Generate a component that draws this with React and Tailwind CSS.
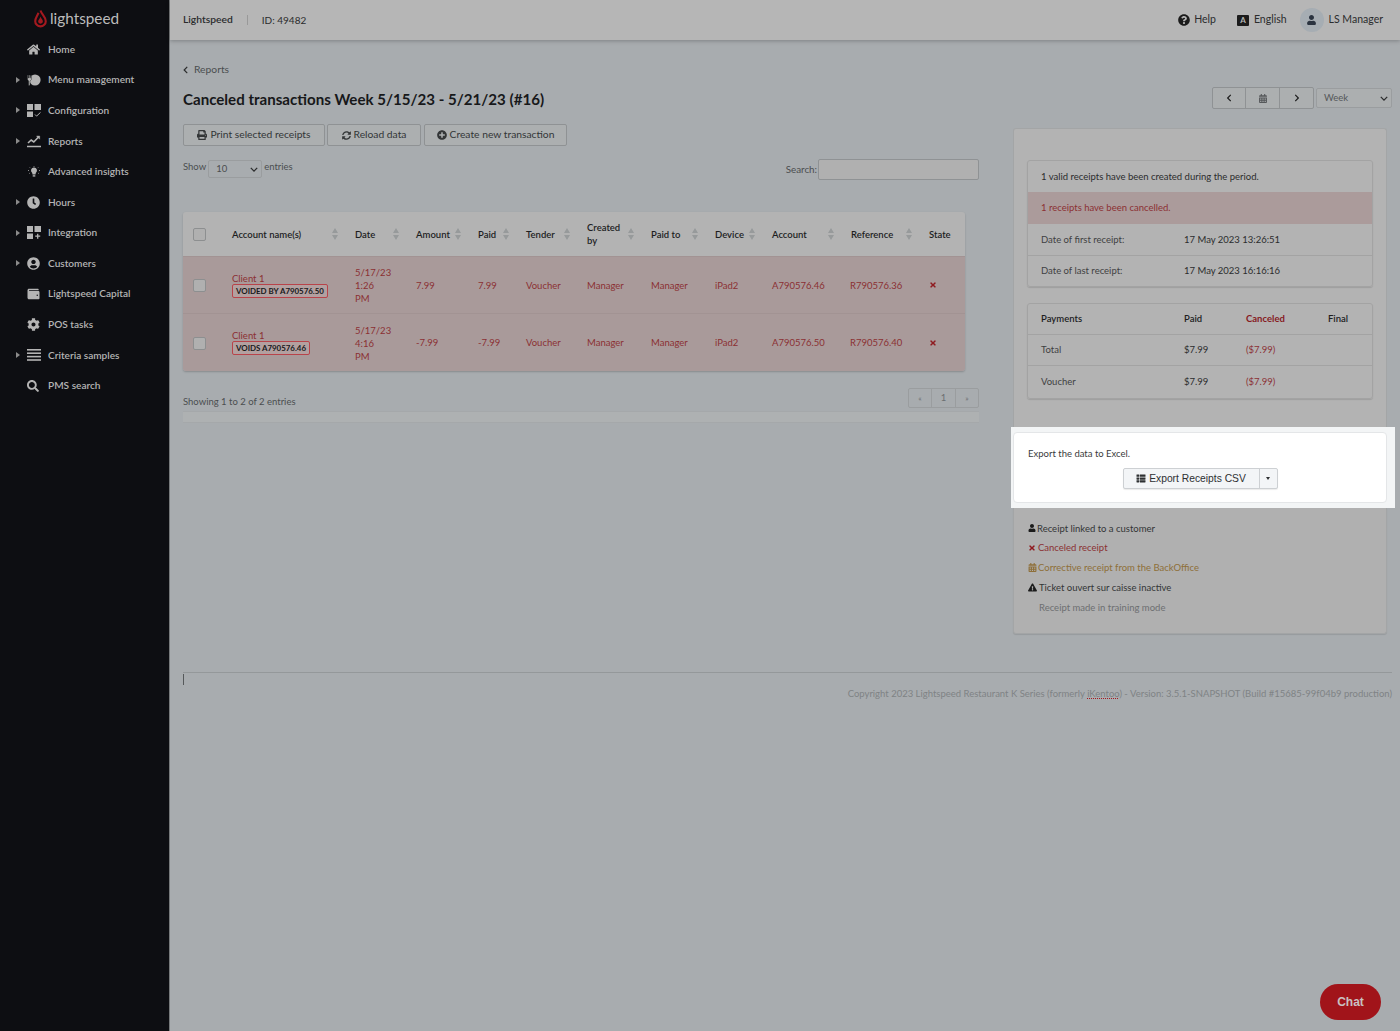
import {
  FaHome, FaClock, FaUserCircle, FaCog, FaSearch, FaQuestionCircle, FaPrint, FaSyncAlt, FaPlusCircle,
  FaTimes, FaUser, FaCalendarAlt, FaExclamationTriangle, FaChevronLeft, FaChevronRight, FaThList,
  FaWallet,
} from 'react-icons/fa'

function MenuIcon() {
  return (
    <svg viewBox="0 0 14 12" className="w-[14px] h-[12px]" fill="currentColor">
      <circle cx="8" cy="6" r="5.6" />
      <path d="M0.5 1h1v3h.6V1h1v3h.6V1h.8v4.5L3 7v4.5H1.6V7L.5 5.5z" stroke="#0d0e12" strokeWidth=".4" />
    </svg>
  )
}

function ConfigIcon() {
  return (
    <svg viewBox="0 0 14 13" className="w-[14px] h-[13px]" fill="currentColor">
      <rect x="0" y="0" width="6" height="6" />
      <rect x="7.5" y="0" width="6.5" height="6" />
      <rect x="0" y="7.5" width="6" height="5.5" />
      <path d="M8 10.5l1.6 1.6L13.5 8.4" fill="none" stroke="currentColor" strokeWidth="1" />
    </svg>
  )
}

function IntegrationIcon() {
  return (
    <svg viewBox="0 0 14 13" className="w-[14px] h-[13px]" fill="currentColor">
      <rect x="0" y="0" width="6" height="6" />
      <rect x="7.5" y="0" width="6.5" height="6" />
      <rect x="0" y="7.5" width="6" height="5.5" />
      <path d="M10.7 7.7v5M8.2 10.2h5" fill="none" stroke="currentColor" strokeWidth="1.3" />
    </svg>
  )
}

function ReportsIcon() {
  return (
    <svg viewBox="0 0 14 13" className="w-[14px] h-[13px]" fill="none" stroke="currentColor">
      <path d="M1 8l3.2-3 2.6 2L12 1.5" strokeWidth="1.6" />
      <path d="M9.5 1h3.2v3.2z" fill="currentColor" strokeWidth=".4" />
      <path d="M0 11.5h14" strokeWidth="1.5" />
    </svg>
  )
}

function BarsIcon() {
  return (
    <svg viewBox="0 0 14 12" className="w-[14px] h-[12px]" fill="currentColor">
      <rect y="0" width="14" height="1.6" />
      <rect y="3.4" width="14" height="1.6" />
      <rect y="6.8" width="14" height="1.6" />
      <rect y="10.2" width="14" height="1.6" />
    </svg>
  )
}

function BulbIcon() {
  return (
    <svg viewBox="0 0 14 12" className="w-[14px] h-[12px]" fill="currentColor">
      <path d="M7 1.500a3 3 0 0 1 1.800 5.400L8.500 8.500h-3l-.3-1.600A3 3 0 0 1 7 1.500z" />
      <rect x="5.700" y="9.200" width="2.600" height="1.400" />
      <path d="M7 0v.8M2.800 1.500l.6.6M11.200 1.500l-.6.6M1 4.500h1M12 4.500h1M2.300 7.500l.7-.5M11.700 7.500l-.7-.5" stroke="currentColor" strokeWidth=".8" />
    </svg>
  )
}

const navItems = [
  { label: 'Home', icon: <FaHome className="w-[13px] h-[13px]" /> },
  { label: 'Menu management', icon: <MenuIcon />, caret: true },
  { label: 'Configuration', icon: <ConfigIcon />, caret: true },
  { label: 'Reports', icon: <ReportsIcon />, caret: true },
  { label: 'Advanced insights', icon: <BulbIcon /> },
  { label: 'Hours', icon: <FaClock className="w-[13px] h-[13px]" />, caret: true },
  { label: 'Integration', icon: <IntegrationIcon />, caret: true },
  { label: 'Customers', icon: <FaUserCircle className="w-[13px] h-[13px]" />, caret: true },
  { label: 'Lightspeed Capital', icon: <FaWallet className="w-[13px] h-[12px]" /> },
  { label: 'POS tasks', icon: <FaCog className="w-[13px] h-[13px]" /> },
  { label: 'Criteria samples', icon: <BarsIcon />, caret: true },
  { label: 'PMS search', icon: <FaSearch className="w-[12px] h-[12px]" /> },
]

const columns = [
  { label: 'Account name(s)', w: 'w-[123px]' },
  { label: 'Date', w: 'w-[61px]' },
  { label: 'Amount', w: 'w-[62px]' },
  { label: 'Paid', w: 'w-[48px]' },
  { label: 'Tender', w: 'w-[61px]' },
  { label: 'Created by', w: 'w-[64px]' },
  { label: 'Paid to', w: 'w-[64px]' },
  { label: 'Device', w: 'w-[57px]' },
  { label: 'Account', w: 'w-[79px]' },
  { label: 'Reference', w: 'w-[78px]' },
]

const rows = [
  { tag: 'VOIDED BY A790576.50', time: '1:26', amount: '7.99', account: 'A790576.46', reference: 'R790576.36' },
  { tag: 'VOIDS A790576.46', time: '4:16', amount: '-7.99', account: 'A790576.50', reference: 'R790576.40' },
]

function Sort() {
  return (
    <svg viewBox="0 0 6 12" className="w-[6px] h-[12px] shrink-0" fill="#979a9b">
      <path d="M3 0l3 5H0zM3 12L0 7h6z" />
    </svg>
  )
}

function Checkbox() {
  return <span className="block w-[13px] h-[13px] rounded-[2px] border border-[#8d8f90] bg-[#b0b0b0]" />
}

function ToolButton({ icon, children, className }) {
  return (
    <button className={`h-[22px] flex items-center justify-center gap-[3px] rounded-[2px] border border-[#8f9294] bg-[#acafb0] text-[10.3px] text-[#333637] ${className}`}>
      {icon}
      {children}
    </button>
  )
}

function Chevron({ className }) {
  return (
    <svg viewBox="0 0 10 6" className={`w-[8px] h-[5px] ${className}`} fill="none" stroke="currentColor" strokeWidth="1.6">
      <path d="M1 1l4 4 4-4" />
    </svg>
  )
}

export default function App() {
  return (
    <div className="flex min-h-screen bg-[#a8acaf] font-['Lato',sans-serif] text-[9.5px] text-[#2b2c2d]">
      <aside className="w-[170px] shrink-0 bg-[#0d0e12] border-r border-[#76797b] text-[#b4b4b4]">
        <div className="h-[34px] flex items-start pt-[9px] pl-[34px] gap-[3px]">
          <svg viewBox="0 0 12 18" className="w-[13px] h-[19px]" fill="none" stroke="#a4191f" strokeWidth="2">
            <path d="M6 1.500C7 5 11 7.500 11 11.500A5 5 0 0 1 1 11.500C1 8.500 3.500 6 4 3.500" />
            <path d="M6 7c.5 2 2.300 3 2.300 4.700a2.300 2.300 0 0 1-4.600 0C3.700 10.400 5.500 9 6 7z" fill="#a4191f" stroke="none" />
          </svg>
          <span className="mt-[2px] text-[15.3px] leading-none text-[#bcbcbc]">lightspeed</span>
        </div>
        <nav className="flex flex-col">
          {navItems.map((item) => (
            <div key={item.label} className="h-[30.6px] flex items-center">
              <span className="w-[27px] pl-[16px] flex items-center">
                {item.caret && <span className="w-0 h-0 border-y-[3px] border-y-transparent border-l-[4px] border-l-[#8b8b8b]" />}
              </span>
              <span className="w-[21px] flex justify-start">{item.icon}</span>
              <span className="text-[10.1px] font-semibold whitespace-nowrap">{item.label}</span>
            </div>
          ))}
        </nav>
      </aside>

      <div className="flex-1 min-w-0 flex flex-col">
        <header className="h-10 shrink-0 flex items-center justify-between pl-[13px] pr-[17px] bg-[#b6b6b6] shadow-[0_1px_4px_rgba(0,0,0,0.25)] text-[10.5px]">
          <div className="flex items-center">
            <span className="font-semibold text-[10.3px]">Lightspeed</span>
            <span className="w-px h-[10px] bg-[#999] ml-[14px] mr-[14px]" />
            <span className="text-[10px]">ID: 49482</span>
          </div>
          <div className="flex items-center">
            <FaQuestionCircle className="w-[12px] h-[12px] text-[#1b1b1b] mr-1" />
            <span>Help</span>
            <span className="w-[16px] h-[12px] ml-[21px] mr-[1px] flex items-center">
              <span className="w-[12px] h-[11px] bg-[#1b1b1b] rounded-[1px] text-[#b6b6b6] text-[8px] leading-[11px] text-center font-bold">A</span>
            </span>
            <span>English</span>
            <span className="w-[24px] h-[24px] rounded-full bg-[#a6adb3] ml-[13px] mr-[5px] flex items-center justify-center">
              <FaUser className="w-[9px] h-[10px] text-[#2a3340]" />
            </span>
            <span>LS Manager</span>
          </div>
        </header>

        <main className="flex-1 pl-[13px] pr-[8px]">
          <div className="h-[84px]">
            <div className="pt-[23px] flex items-center gap-[6px] text-[10.3px] leading-[13px] text-[#4b4e50]">
              <FaChevronLeft className="w-[5px] h-[8px] text-[#2b2c2d]" />
              Reports
            </div>
            <div className="flex items-start justify-between">
              <h1 className="mt-[13px] text-[15.1px] leading-[20px] font-bold text-[#17181a]">
                Canceled transactions Week 5/15/23 - 5/21/23 (#16)
              </h1>
              <div className="mt-[11px] flex items-center gap-[2px]">
                <div className="flex h-[22px] rounded-[2px] border border-[#8f9294] bg-[#acafb0]">
                  <span className="w-[33px] flex items-center justify-center border-r border-[#8f9294]">
                    <FaChevronLeft className="w-[6px] h-[8px] text-[#1d1d1d]" />
                  </span>
                  <span className="w-[34px] flex items-center justify-center border-r border-[#8f9294]">
                    <FaCalendarAlt className="w-[8px] h-[9px] text-[#55585a]" />
                  </span>
                  <span className="w-[33px] flex items-center justify-center">
                    <FaChevronRight className="w-[6px] h-[8px] text-[#1d1d1d]" />
                  </span>
                </div>
                <div className="w-[76px] h-[20px] rounded-[2px] border border-[#9a9d9f] bg-[#acafb0] pl-[7px] pr-[3px] flex items-center justify-between text-[#55585a]">
                  Week
                  <Chevron className="text-[#2b2c2d]" />
                </div>
              </div>
            </div>
          </div>

          <div className="flex items-start gap-[34px]">
            <section className="w-[796px] shrink-0">
              <div className="flex gap-[2px]">
                <ToolButton className="w-[142px]" icon={<FaPrint className="w-[10px] h-[10px]" />}>Print selected receipts</ToolButton>
                <ToolButton className="w-[94px]" icon={<FaSyncAlt className="w-[9px] h-[9px]" />}>Reload data</ToolButton>
                <ToolButton className="w-[143px] ml-px" icon={<FaPlusCircle className="w-[10px] h-[10px]" />}>Create new transaction</ToolButton>
              </div>

              <div className="mt-[13px] flex items-start justify-between">
                <div className="flex items-start gap-[2px] text-[#4b4e50]">
                  <span className="leading-[16px]">Show</span>
                  <span className="w-[54px] h-[18px] mt-[1px] rounded-[2px] border border-[#9a9d9f] pl-[7px] pr-[3px] flex items-center justify-between">
                    10
                    <Chevron className="text-[#2b2c2d]" />
                  </span>
                  <span className="leading-[16px]">entries</span>
                </div>
                <div className="flex items-center gap-px text-[#4b4e50]">
                  <span className="text-[9.8px]">Search:</span>
                  <span className="block w-[161px] h-[21px] rounded-[2px] border border-[#8f9294] bg-[#b0b0b0]" />
                </div>
              </div>

              <div className="mt-[32px] w-[782px] rounded-[3px] overflow-hidden shadow-[0_1px_2px_rgba(0,0,0,0.2)]">
                <table className="w-full table-fixed border-collapse text-left">
                  <thead>
                    <tr className="h-[44px] bg-[#b3b3b3] text-[#1d1e1f]">
                      <th className="w-[37px] pl-[10px] pt-px"><Checkbox /></th>
                      {columns.map((col) => (
                        <th key={col.label} className={`${col.w} font-semibold p-0 pt-px`}>
                          <div className="flex items-center justify-between pl-[12px] pr-[5px] leading-[13px]">
                            <span>{col.label}</span>
                            <Sort />
                          </div>
                        </th>
                      ))}
                      <th className="pl-[12px] pt-[2px] font-semibold">State</th>
                    </tr>
                  </thead>
                  <tbody className="text-[#8b3033]">
                    {rows.map((row) => (
                      <tr key={row.account} className="h-[57.5px] bg-[#a99a9a] border-t border-[#a29393]">
                        <td className="pl-[10px] pt-px"><Checkbox /></td>
                        <td className="pl-[12px] pt-px whitespace-nowrap">
                          <div className="leading-[11px]">Client 1</div>
                          <span className="inline-block px-[3px] h-[14px] leading-[12px] rounded-[2px] border border-[#b8434a] bg-[#b3a0a0] text-[7.9px] font-bold text-[#17181a]">{row.tag}</span>
                        </td>
                        <td className="pl-[12px] pt-[2px] leading-[13px]">5/17/23<br />{row.time}<br />PM</td>
                        <td className="pl-[12px] pt-[2px]">{row.amount}</td>
                        <td className="pl-[12px] pt-[2px]">{row.amount}</td>
                        <td className="pl-[12px] pt-[2px]">Voucher</td>
                        <td className="pl-[12px] pt-[2px]">Manager</td>
                        <td className="pl-[12px] pt-[2px]">Manager</td>
                        <td className="pl-[12px] pt-[2px]">iPad2</td>
                        <td className="pl-[12px] pt-[2px]">{row.account}</td>
                        <td className="pl-[11px] pt-[2px]">{row.reference}</td>
                        <td className="pl-[12px]"><FaTimes className="w-[8px] h-[8px] text-[#8f1b20]" /></td>
                      </tr>
                    ))}
                  </tbody>
                </table>
              </div>

              <div className="mt-[17px] h-[21px] flex items-start justify-between">
                <span className="mt-[7px] leading-[13px] text-[#4b4e50]">Showing 1 to 2 of 2 entries</span>
                <div className="flex h-[20px] rounded-[2px] border border-[#9a9d9f] text-[#6c6f71]">
                  <span className="w-[23px] flex items-center justify-center border-r border-[#9a9d9f] text-[8px]">«</span>
                  <span className="w-[24px] flex items-center justify-center border-r border-[#9a9d9f]">1</span>
                  <span className="w-[22px] flex items-center justify-center text-[8px]">»</span>
                </div>
              </div>
              <div className="mt-[2px] h-[12px] bg-[#aeb1b2] border-y border-[#a5a8aa]" />
            </section>

            <aside className="w-[374px] shrink-0 mt-1">
              <div className="h-[299px] rounded-t-[3px] border border-b-0 border-[#a3a5a6] bg-[#b3b3b3] pt-[31px] px-[13px]">
                <div className="rounded-[3px] border border-[#a3a3a3] shadow-[0_1px_1px_rgba(0,0,0,0.12)] overflow-hidden">
                  <div className="h-[31px] pt-[2px] px-[13px] flex items-center">1 valid receipts have been created during the period.</div>
                  <div className="h-[32px] px-[13px] flex items-center bg-[#ab9b9b] text-[#8b3033]">1 receipts have been cancelled.</div>
                  <div className="h-[32px] pt-[2px] px-[13px] flex items-center border-b border-[#a3a3a3]">
                    <span className="w-[143px] text-[#3f4142]">Date of first receipt:</span>17 May 2023 13:26:51
                  </div>
                  <div className="h-[30px] pt-px px-[13px] flex items-center">
                    <span className="w-[143px] text-[#3f4142]">Date of last receipt:</span>17 May 2023 16:16:16
                  </div>
                </div>
                <div className="mt-[16px] rounded-[3px] border border-[#a3a3a3] shadow-[0_1px_1px_rgba(0,0,0,0.12)]">
                  <div className="h-[31px] px-[13px] flex items-center border-b border-[#a3a3a3] font-semibold text-[#1d1e1f]">
                    <span className="w-[143px]">Payments</span>
                    <span className="w-[62px]">Paid</span>
                    <span className="w-[82px] text-[#861a1f] font-bold">Canceled</span>
                    <span>Final</span>
                  </div>
                  <div className="h-[31px] px-[13px] flex items-center border-b border-[#a3a3a3]">
                    <span className="w-[143px] text-[#3f4142]">Total</span>
                    <span className="w-[62px]">$7.99</span>
                    <span className="text-[#8b3033]">($7.99)</span>
                  </div>
                  <div className="h-[32px] px-[13px] flex items-center">
                    <span className="w-[143px] text-[#3f4142]">Voucher</span>
                    <span className="w-[62px]">$7.99</span>
                    <span className="text-[#8b3033]">($7.99)</span>
                  </div>
                </div>
              </div>

              <div className="ml-[-2px] mr-[-8px] pl-[2px] pr-[8px] py-[5px] bg-[#f3f5f6]">
                <div className="h-[71px] rounded-[4px] border border-[#e4e6e8] bg-white px-[14px] pt-[14px] text-[#3a3b3c]">
                  <p className="leading-[13px]">Export the data to Excel.</p>
                  <div className="mt-[8px] flex justify-center">
                    <div className="flex h-[21px] rounded-[2px] border border-[#cdd0d3] bg-[#f3f5f7] shadow-[0_1px_1px_rgba(0,0,0,0.08)] font-['Liberation_Sans',sans-serif] text-[10.3px] text-[#2e3032]">
                      <span className="w-[136px] flex items-center justify-center gap-[3px] border-r border-[#cdd0d3]">
                        <FaThList className="w-[10px] h-[9px]" />
                        Export Receipts CSV
                      </span>
                      <span className="w-[17px] flex items-center justify-center">
                        <span className="w-0 h-0 border-x-[2.5px] border-x-transparent border-t-[3px] border-t-[#2e3032]" />
                      </span>
                    </div>
                  </div>
                </div>
              </div>

              <div className="h-[126px] rounded-b-[3px] border border-t-0 border-[#a3a5a6] bg-[#b0b0b0] shadow-[0_1px_1px_rgba(0,0,0,0.1)] pl-[14px] pt-[13.500px] flex flex-col gap-[6.750px] leading-[13px]">
                <div className="flex items-center gap-[1px] text-[#333536]">
                  <FaUser className="w-[8px] h-[8px] text-[#1b1b1b]" />Receipt linked to a customer
                </div>
                <div className="flex items-center gap-[2px] text-[#8b3033]">
                  <FaTimes className="w-[8px] h-[8px] text-[#8f1b20]" />Canceled receipt
                </div>
                <div className="flex items-center gap-[1px] text-[#8e6f38]">
                  <FaCalendarAlt className="w-[9px] h-[9px]" />Corrective receipt from the BackOffice
                </div>
                <div className="flex items-center gap-[2px] text-[#333536]">
                  <FaExclamationTriangle className="w-[9px] h-[9px] text-[#1b1b1b]" />Ticket ouvert sur caisse inactive
                </div>
                <div className="pl-[11px] text-[#6d6f70]">Receipt made in training mode</div>
              </div>
            </aside>
          </div>

          <footer className="mt-[38px] border-t border-[#94989a] flex items-start justify-between">
            <span className="w-px h-[11px] mt-px bg-[#55585a]" />
            <p className="mt-[14px] text-[9.5px] leading-[13px] text-[#7f8385]">
              Copyright 2023 Lightspeed Restaurant K Series (formerly <span className="underline decoration-dotted decoration-[#a4191f]">iKentoo</span>) - Version: 3.5.1-SNAPSHOT (Build #15685-99f04b9 production)
            </p>
          </footer>
        </main>
      </div>

      <button className="fixed right-[19px] bottom-[11px] w-[61px] h-[36px] rounded-full bg-[#a1141a] text-[#c9c1c1] text-[12px] font-bold font-['Liberation_Sans',sans-serif]">
        Chat
      </button>
    </div>
  )
}
